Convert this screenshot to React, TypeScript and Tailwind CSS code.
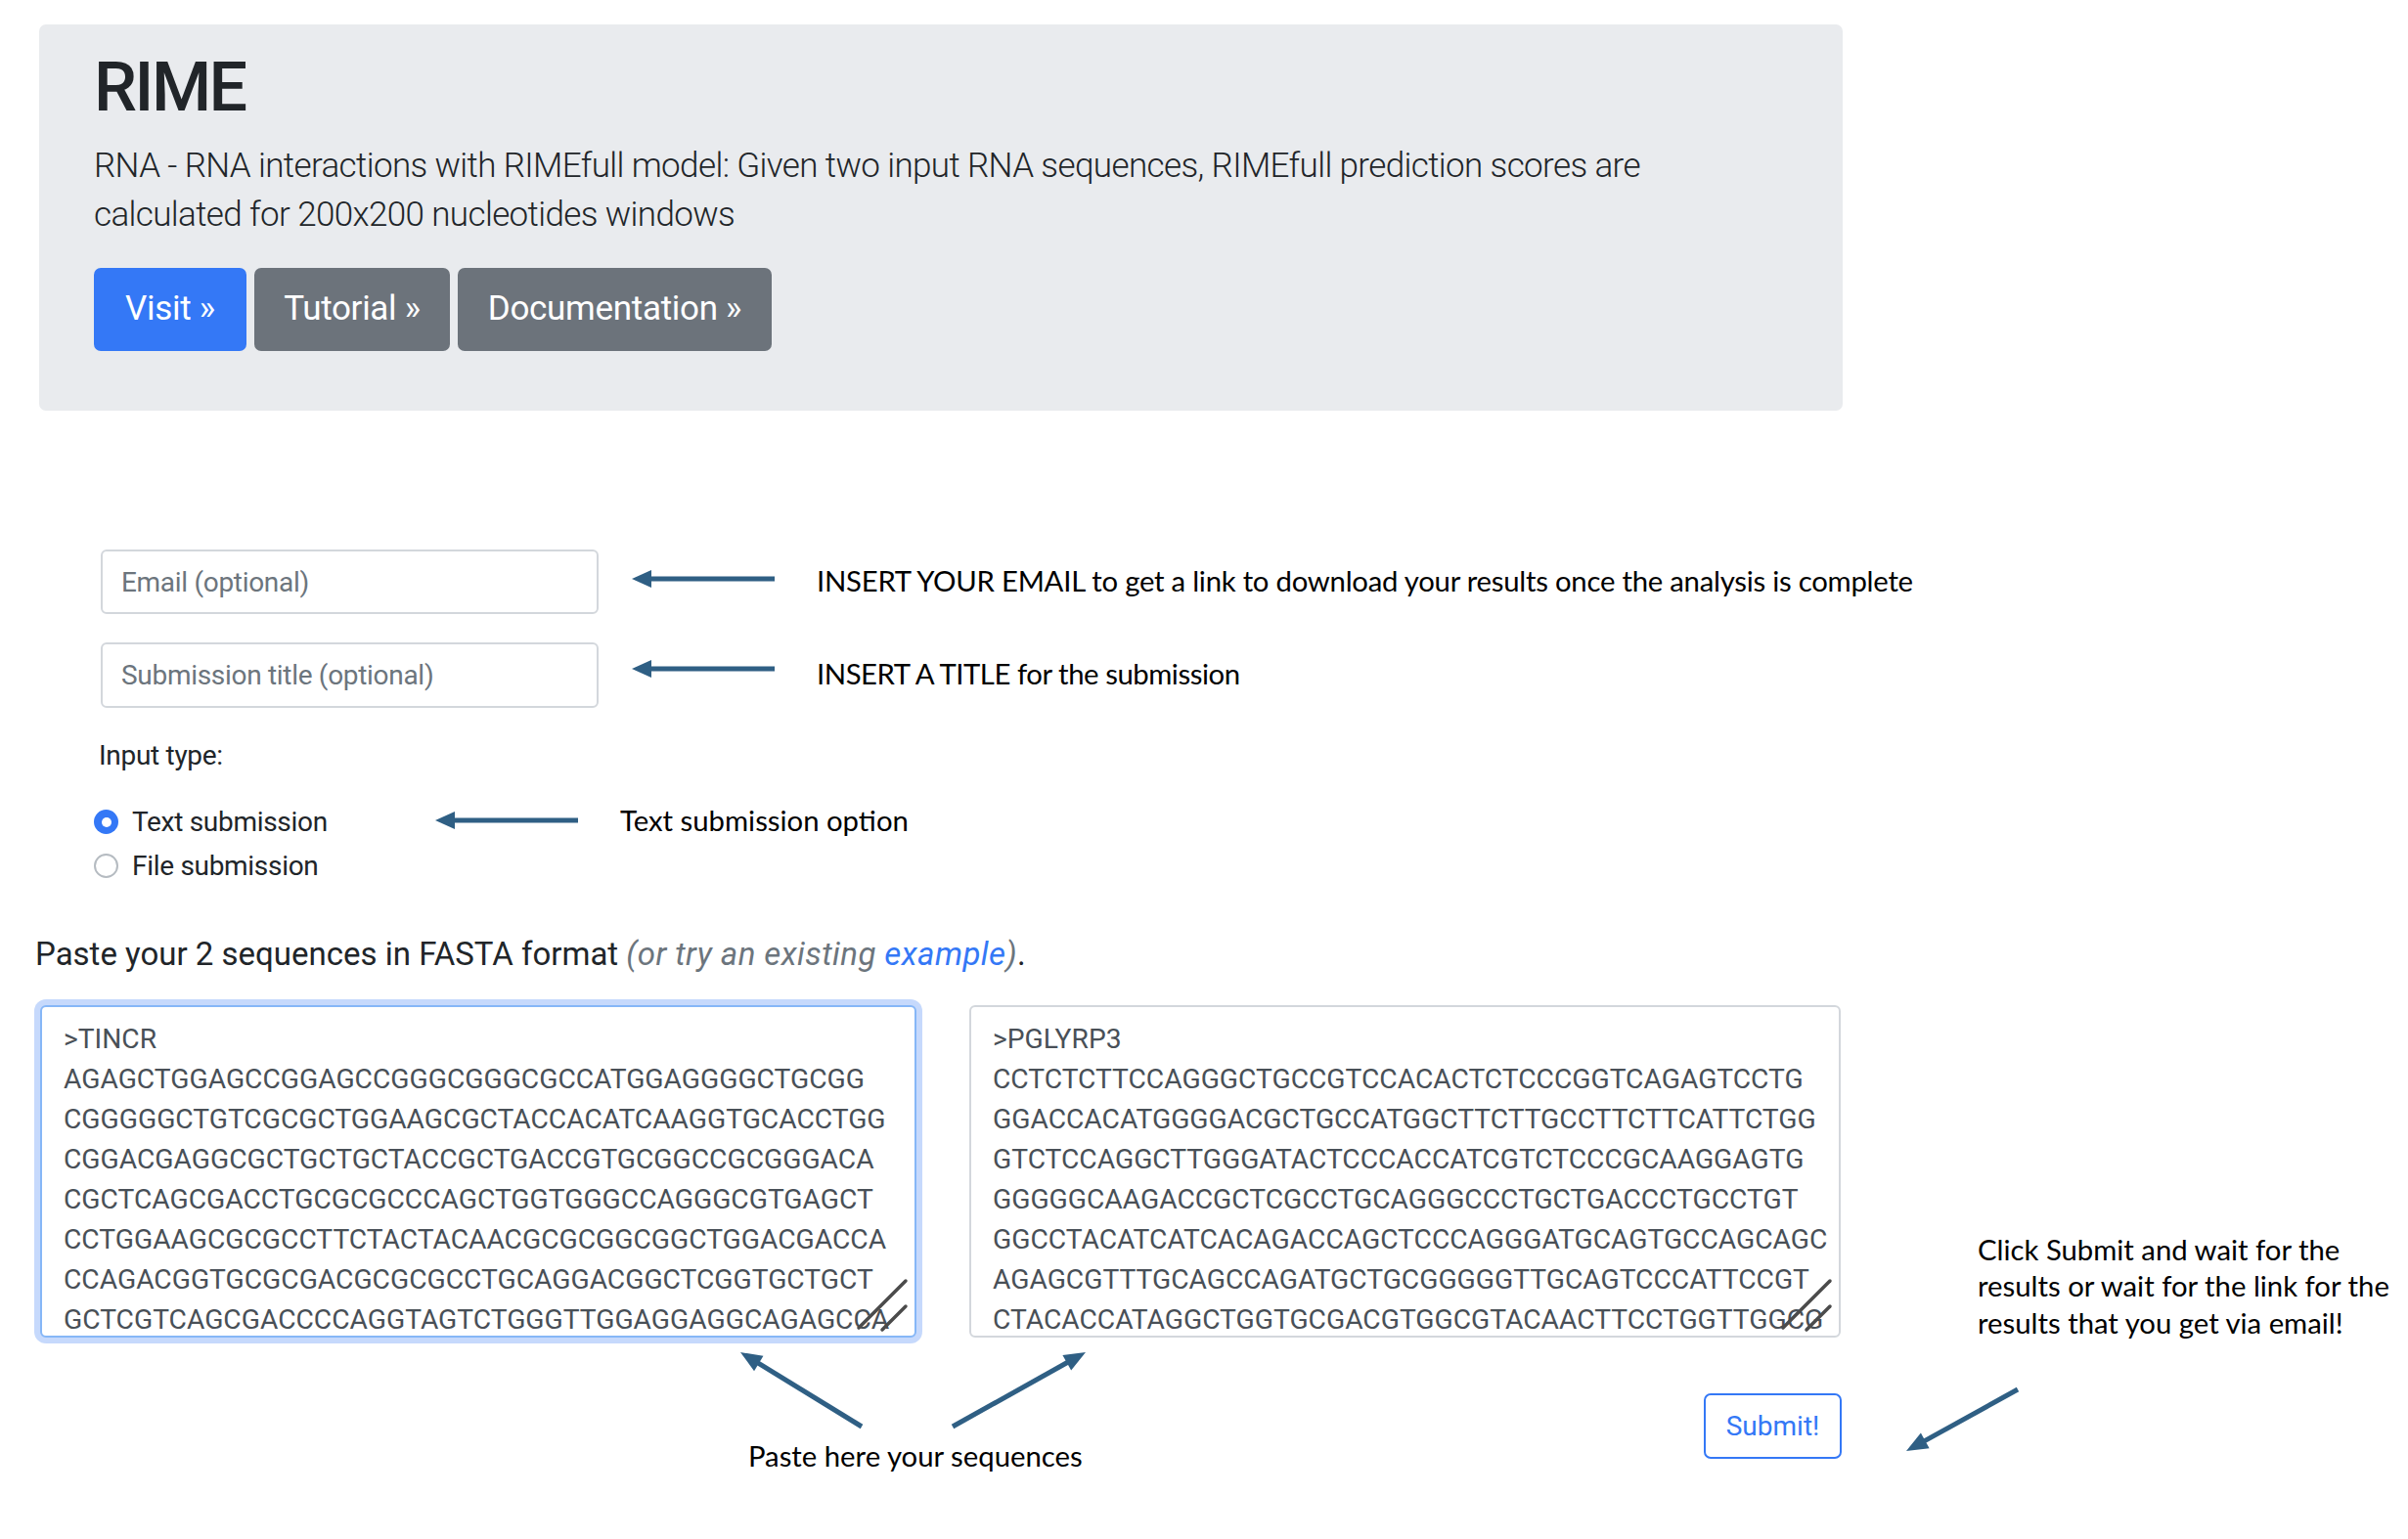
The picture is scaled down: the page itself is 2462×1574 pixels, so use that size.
import React from 'react';

const ARROW = '#2f5f84';

const TINCR = [
    '>TINCR',
    'AGAGCTGGAGCCGGAGCCGGGCGGGCGCCATGGAGGGGCTGCGG',
    'CGGGGGCTGTCGCGCTGGAAGCGCTACCACATCAAGGTGCACCTGG',
    'CGGACGAGGCGCTGCTGCTACCGCTGACCGTGCGGCCGCGGGACA',
    'CGCTCAGCGACCTGCGCGCCCAGCTGGTGGGCCAGGGCGTGAGCT',
    'CCTGGAAGCGCGCCTTCTACTACAACGCGCGGCGGCTGGACGACCA',
    'CCAGACGGTGCGCGACGCGCGCCTGCAGGACGGCTCGGTGCTGCT',
    'GCTCGTCAGCGACCCCAGGTAGTCTGGGTTGGAGGAGGCAGAGCCA',
];

const PGLYRP3 = [
    '>PGLYRP3',
    'CCTCTCTTCCAGGGCTGCCGTCCACACTCTCCCGGTCAGAGTCCTG',
    'GGACCACATGGGGACGCTGCCATGGCTTCTTGCCTTCTTCATTCTGG',
    'GTCTCCAGGCTTGGGATACTCCCACCATCGTCTCCCGCAAGGAGTG',
    'GGGGGCAAGACCGCTCGCCTGCAGGGCCCTGCTGACCCTGCCTGT',
    'GGCCTACATCATCACAGACCAGCTCCCAGGGATGCAGTGCCAGCAGC',
    'AGAGCGTTTGCAGCCAGATGCTGCGGGGGTTGCAGTCCCATTCCGT',
    'CTACACCATAGGCTGGTGCGACGTGGCGTACAACTTCCTGGTTGGCG',
];

type Seg = { x1: number; y1: number; x2: number; y2: number };

// line from (x1,y1) with the arrow head at (x2,y2)
const ArrowSvg: React.FC<{ w: number; h: number; arrows: Seg[]; className?: string; head?: number; half?: number }> = ({
    w,
    h,
    arrows,
    className = '',
    head = 20,
    half = 9,
}) => (
    <svg width={w} height={h} viewBox={`0 0 ${w} ${h}`} className={`shrink-0 ${className}`}>
        {arrows.map((a, i) => {
            const dx = a.x2 - a.x1;
            const dy = a.y2 - a.y1;
            const len = Math.hypot(dx, dy);
            const ux = dx / len;
            const uy = dy / len;
            const bx = a.x2 - ux * head;
            const by = a.y2 - uy * head;
            const px = -uy * half;
            const py = ux * half;
            return (
                <g key={i}>
                    <line x1={a.x1} y1={a.y1} x2={bx + ux * 2} y2={by + uy * 2} stroke={ARROW} strokeWidth={5} />
                    <polygon points={`${a.x2},${a.y2} ${bx + px},${by + py} ${bx - px},${by - py}`} fill={ARROW} />
                </g>
            );
        })}
    </svg>
);

const LeftArrow: React.FC<{ className?: string }> = ({ className }) => (
    <ArrowSvg w={146} h={24} arrows={[{ x1: 146, y1: 12, x2: 0, y2: 12 }]} className={className} />
);

const Grip = () => (
    <svg width={60} height={60} className="absolute right-0 bottom-0">
        <line x1={51} y1={4} x2={3} y2={52} stroke="#4b4b4b" strokeWidth={3.5} strokeLinecap="round" />
        <line x1={51} y1={30} x2={27} y2={54} stroke="#4b4b4b" strokeWidth={3.5} strokeLinecap="round" />
    </svg>
);

const SeqBox: React.FC<{ lines: string[]; focused?: boolean; className?: string }> = ({ lines, focused, className = '' }) => (
    <div
        className={`relative h-[340px] shrink-0 overflow-hidden rounded-[6px] border-2 bg-white pt-[12px] pl-[22px] text-[28.2px] leading-[41px] text-[#495057] ${
            focused ? 'border-[#86b7f7] shadow-[0_0_0_6px_rgba(52,120,246,0.28)]' : 'border-[#d3d7dc]'
        } ${className}`}
    >
        {lines.map((l) => (
            <div key={l} className="whitespace-pre">
                {l}
            </div>
        ))}
        <Grip />
    </div>
);

const Note: React.FC<{ children: React.ReactNode; className?: string }> = ({ children, className = '' }) => (
    <div className={`font-['Lato',sans-serif] text-[29.3px] leading-[37.5px] text-black ${className}`}>{children}</div>
);

export default function App() {
    return (
        <div className="relative h-[1574px] w-[2462px] overflow-hidden bg-white font-['Roboto',sans-serif] text-[#212529]">
            {/* Jumbotron */}
            <div className="pt-[25px] pl-[40px]">
                <div className="h-[395px] w-[1844px] rounded-[7px] bg-[#e9ebee] pt-[22px] pl-[56px]">
                    <h1 className="text-[70px] leading-[84px] font-medium tracking-[-2.5px]">RIME</h1>
                    <p className="mt-[14px] text-[35px] leading-[50px] font-light tracking-[-0.62px]">
                        RNA - RNA interactions with RIMEfull model: Given two input RNA sequences, RIMEfull prediction scores are
                        <br />
                        calculated for 200x200 nucleotides windows
                    </p>
                    <div className="mt-[29px] flex gap-[8px] text-[35px] tracking-[-0.3px] text-white">
                        <a className="flex h-[85px] w-[156px] items-center justify-center rounded-[7px] bg-[#3478f6]">Visit »</a>
                        <a className="flex h-[85px] w-[200px] items-center justify-center rounded-[7px] bg-[#6c737b]">Tutorial »</a>
                        <a className="flex h-[85px] w-[321px] items-center justify-center rounded-[7px] bg-[#6c737b]">Documentation »</a>
                    </div>
                </div>
            </div>

            {/* Email / title */}
            <div className="mt-[142px] ml-[103px] flex items-center">
                <input
                    placeholder="Email (optional)"
                    className="h-[66px] w-[509px] rounded-[6px] border-2 border-[#d3d7dc] pl-[19px] text-[28px] tracking-[-0.3px] outline-none placeholder:text-[#6c757d]"
                />
                <LeftArrow className="ml-[34px] -mt-[6px]" />
                <Note className="ml-[43px] -mt-[2px] tracking-[-0.24px]">
                    INSERT YOUR EMAIL to get a link to download your results once the analysis is complete
                </Note>
            </div>
            <div className="mt-[29px] ml-[103px] flex items-center">
                <input
                    placeholder="Submission title (optional)"
                    className="h-[67px] w-[509px] rounded-[6px] border-2 border-[#d3d7dc] pl-[19px] text-[28px] tracking-[-0.3px] outline-none placeholder:text-[#6c757d]"
                />
                <LeftArrow className="ml-[34px] -mt-[14px]" />
                <Note className="ml-[43px] -mt-[4px] tracking-[-0.45px]">INSERT A TITLE for the submission</Note>
            </div>

            {/* Input type */}
            <div className="mt-[29px] ml-[101px] text-[28px] leading-[40px] tracking-[-0.3px]">Input type:</div>
            <div className="mt-[25px] ml-[96px] text-[28px] tracking-[-0.3px]">
                <div className="flex h-[45px] items-center">
                    <span className="flex h-[25px] w-[25px] shrink-0 items-center justify-center rounded-full bg-[#3478f6]">
                        <span className="h-[10px] w-[10px] rounded-full bg-white" />
                    </span>
                    <span className="ml-[14px] w-[310px]">Text submission</span>
                    <LeftArrow className="-mt-[4px]" />
                    <Note className="ml-[43px] -mt-[4px] tracking-normal">Text submission option</Note>
                </div>
                <div className="flex h-[45px] items-center">
                    <span className="h-[25px] w-[25px] shrink-0 rounded-full border-2 border-[#b5bbc1] bg-white" />
                    <span className="ml-[14px]">File submission</span>
                </div>
            </div>

            {/* Sequences */}
            <p className="mt-[46px] ml-[36px] text-[33px] leading-[44px]">
                Paste your 2 sequences in FASTA format{' '}
                <i className="tracking-[0.43px] text-[#6c757d]">
                    (or try an existing <span className="text-[#3478f6]">example</span>)
                </i>
                .
            </p>
            <div className="mt-[30px] ml-[41px] flex items-end">
                <SeqBox lines={TINCR} focused className="w-[896px]" />
                <SeqBox lines={PGLYRP3} className="ml-[54px] w-[891px]" />
                <Note className="ml-[140px] -mb-[3px]">
                    Click Submit and wait for the
                    <br />
                    results or wait for the link for the
                    <br />
                    results that you get via email!
                </Note>
            </div>

            {/* Bottom row */}
            <div className="mt-[10px] ml-[41px] flex items-start">
                <div className="ml-[709px] w-[365px] shrink-0">
                    <ArrowSvg
                        w={365}
                        h={84}
                        head={22}
                        arrows={[
                            { x1: 131, y1: 81, x2: 7, y2: 5 },
                            { x1: 224, y1: 81, x2: 360, y2: 5 },
                        ]}
                    />
                    <Note className="mt-[8px] ml-[15px] whitespace-nowrap">Paste here your sequences</Note>
                </div>
                <button className="mt-[47px] ml-[627px] flex h-[67px] w-[141px] shrink-0 items-center justify-center rounded-[7px] border-2 border-[#3478f6] text-[28px] text-[#3478f6]">
                    Submit!
                </button>
                <ArrowSvg
                    w={128}
                    h={75}
                    head={22}
                    className="mt-[37px] ml-[57px]"
                    arrows={[{ x1: 123, y1: 6, x2: 9, y2: 69 }]}
                />
            </div>
        </div>
    );
}
